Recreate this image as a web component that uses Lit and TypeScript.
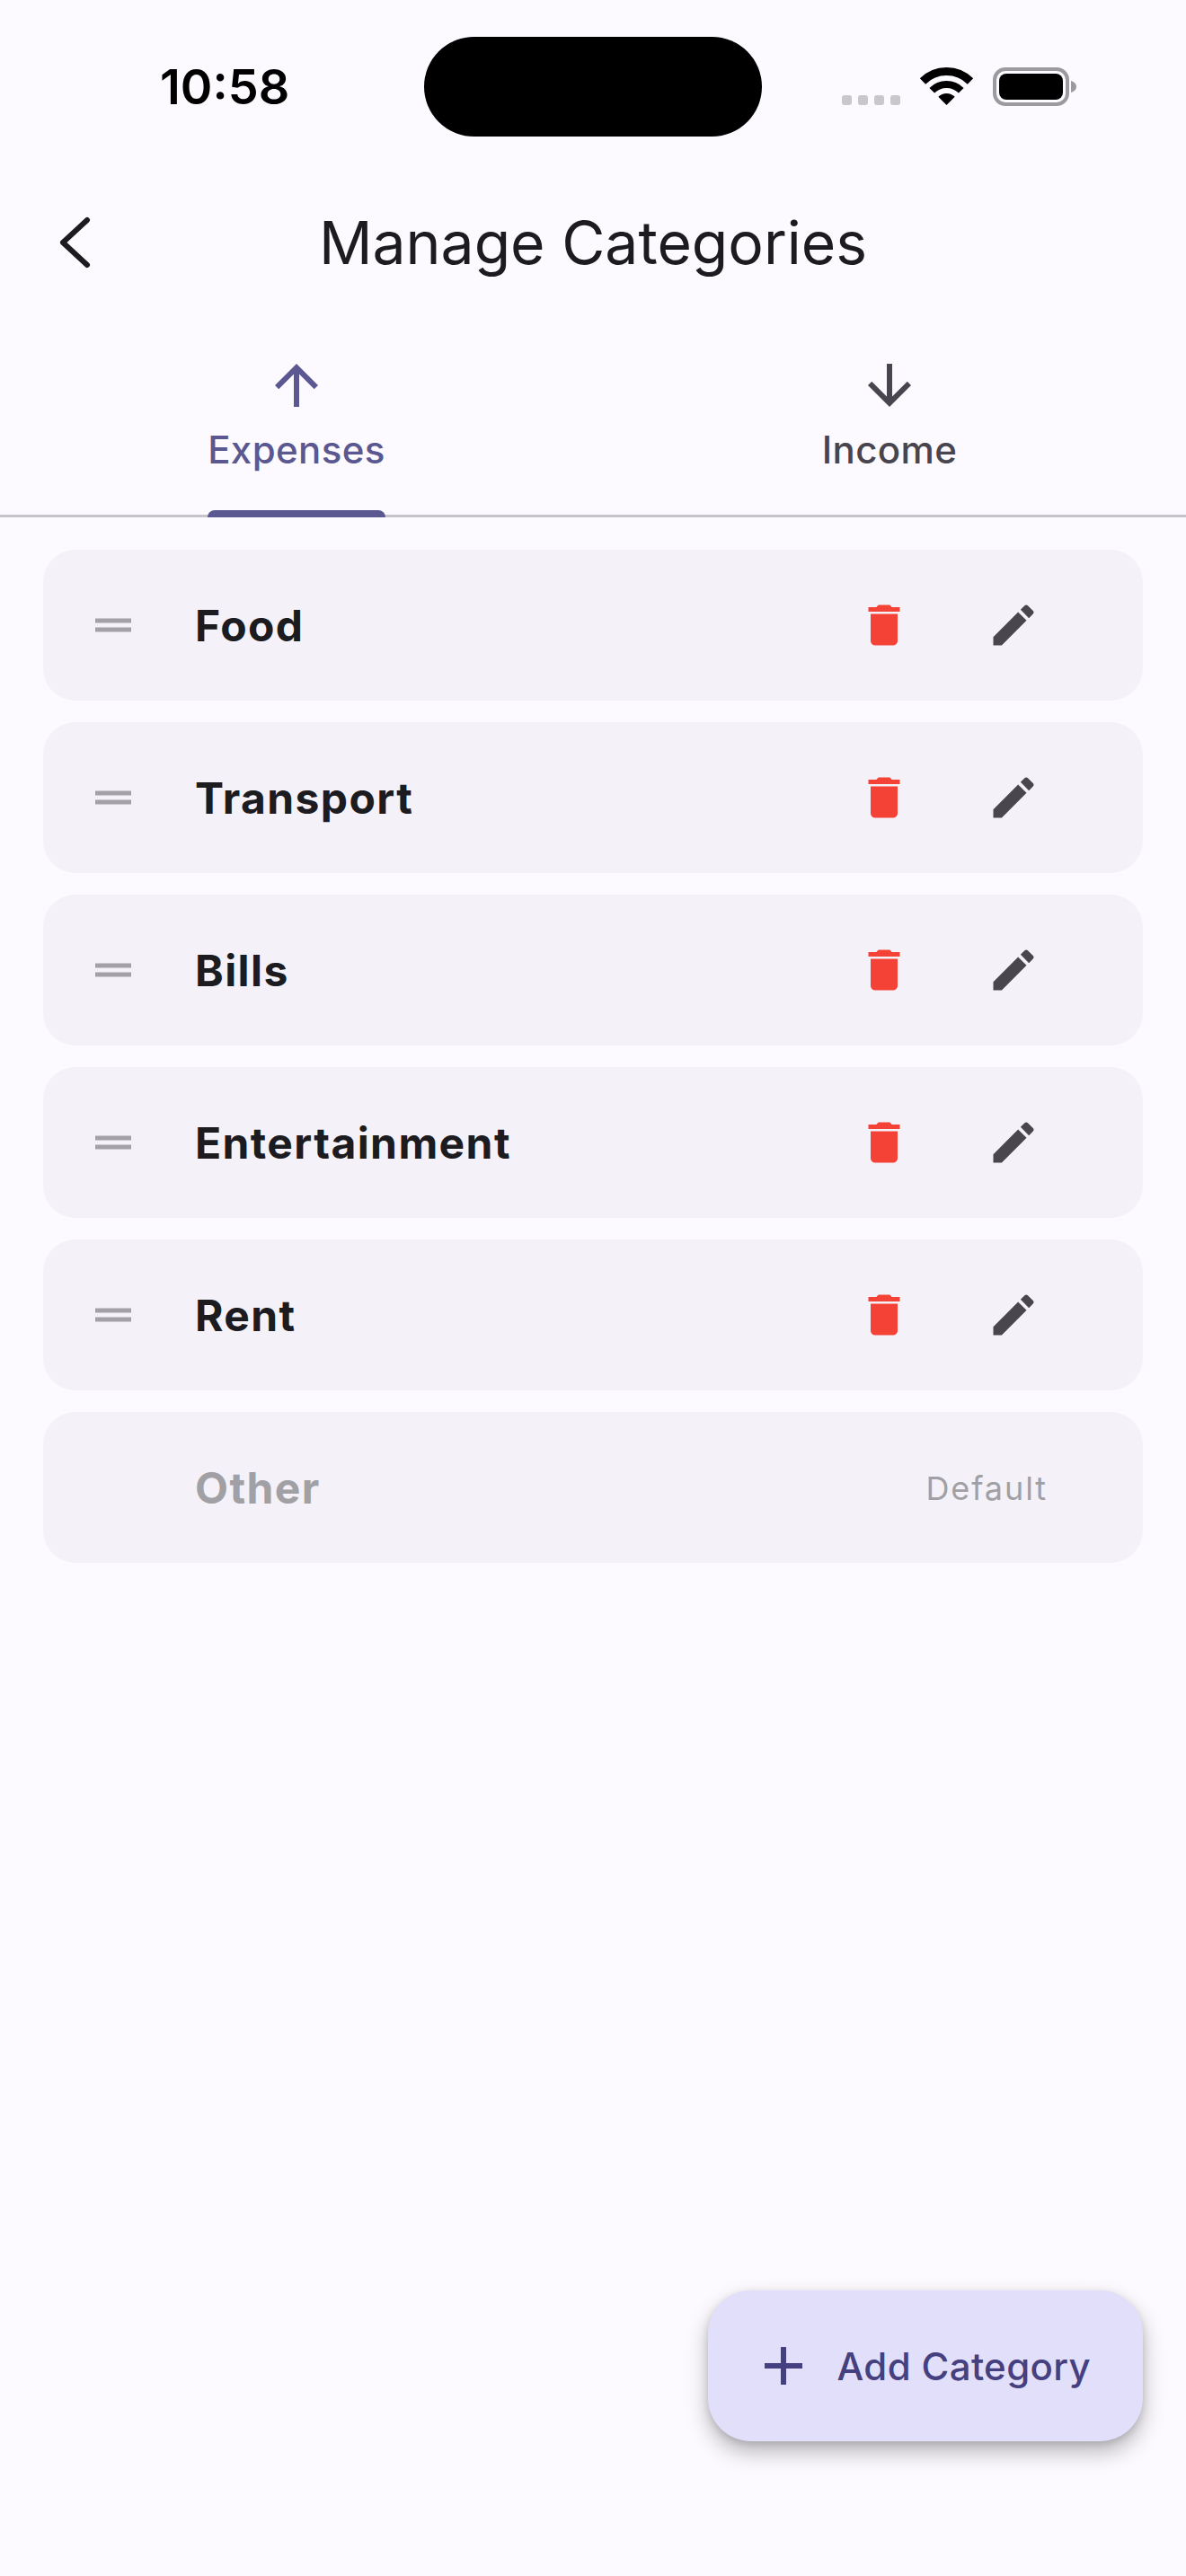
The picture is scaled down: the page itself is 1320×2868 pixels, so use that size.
import { LitElement, html, css, svg } from 'lit';
import { customElement, state } from 'lit/decorators.js';

const icon = (d: string) => html`<svg class="icon" viewBox="0 0 24 24" fill="currentColor">${svg`<path d=${d} />`}</svg>`;

const ARROW_UP = 'M4 12l1.41 1.41L11 7.83V20h2V7.83l5.58 5.59L20 12l-8-8-8 8z';
const ARROW_DOWN = 'M20 12l-1.41-1.41L13 16.17V4h-2v12.17l-5.58-5.59L4 12l8 8 8-8z';
const DRAG = 'M20 9H4v2h16V9zM4 15h16v-2H4v2z';
const TRASH = 'M6 19c0 1.1.9 2 2 2h8c1.1 0 2-.9 2-2V7H6v12zM19 4h-3.5l-1-1h-5l-1 1H5v2h14V4z';
const EDIT = 'M3 17.25V21h3.75L17.81 9.94l-3.75-3.75L3 17.25zM20.71 7.04c.39-.39.39-1.02 0-1.41l-2.34-2.34c-.39-.39-1.02-.39-1.41 0l-1.83 1.83 3.75 3.75 1.83-1.83z';
const PLUS = 'M19 13h-6v6h-2v-6H5v-2h6V5h2v6h6v2z';

@customElement('app-root')
export class AppRoot extends LitElement {
  static styles = css`
    :host {
      display: block;
      position: relative;
      height: 2868px;
      overflow: hidden;
      background: #fcfaff;
      font-family: Inter, 'Liberation Sans', sans-serif;
      color: #1c1b1f;
    }
    .icon {
      display: block;
      width: 60px;
      height: 60px;
    }
    .status {
      display: grid;
      grid-template-columns: 472px 376px 1fr;
      align-items: center;
      height: 192px;
      padding-top: 41px;
      padding-bottom: 40px;
      box-sizing: border-box;
    }
    .time {
      padding-left: 178px;
      font-size: 54px;
      font-weight: 600;
      color: #000;
    }
    .island {
      height: 111px;
      border-radius: 56px;
      background: #000;
    }
    .status-icons {
      display: block;
      margin-left: 89px;
    }
    header {
      display: flex;
      align-items: center;
      justify-content: center;
      position: relative;
      height: 156px;
    }
    header h1 {
      margin: 0;
      font-size: 66px;
      font-weight: 400;
      line-height: 80px;
    }
    .back {
      position: absolute;
      left: 60px;
      top: 44px;
      display: block;
    }
    .tabs {
      display: flex;
      height: 228px;
      box-sizing: border-box;
      border-bottom: 3px solid #c6c3ca;
    }
    .tab {
      flex: 1;
      display: flex;
      justify-content: center;
      color: #49454f;
    }
    .tab.active {
      color: #5b5791;
    }
    .tab-inner {
      position: relative;
      display: flex;
      flex-direction: column;
      align-items: center;
      padding-top: 45px;
    }
    .tab .icon {
      width: 72px;
      height: 72px;
    }
    .tab-label {
      margin-top: 6px;
      font-size: 42px;
      font-weight: 500;
      line-height: 60px;
      letter-spacing: 0.4px;
    }
    .indicator {
      position: absolute;
      left: 0;
      right: 0;
      bottom: -3px;
      height: 8px;
      border-radius: 9px 9px 0 0;
      background: #5b5791;
    }
    .list {
      display: flex;
      flex-direction: column;
      gap: 24px;
      padding: 36px 48px 0;
    }
    .card {
      display: flex;
      align-items: center;
      height: 168px;
      padding: 0 72px 0 48px;
      border-radius: 36px;
      background: #f4f2f8;
    }
    .drag {
      width: 60px;
      height: 60px;
      color: #a3a1a7;
    }
    .name {
      flex: 1;
      margin: 1px 0 0 61px;
      font-size: 48px;
      font-weight: 700;
      line-height: 60px;
      letter-spacing: 1.4px;
    }
    .card.locked .name {
      color: #a1a0a4;
    }
    .default {
      margin: 1px 34px 0 0;
      font-size: 36px;
      font-weight: 400;
      letter-spacing: 1.9px;
      color: #a1a0a4;
    }
    .action {
      display: flex;
      justify-content: center;
      width: 144px;
      color: #49474d;
    }
    .action.danger {
      color: #f44336;
    }
    .fab {
      position: absolute;
      right: 48px;
      bottom: 150px;
      display: flex;
      align-items: center;
      gap: 24px;
      height: 168px;
      padding: 0 58px 0 48px;
      border-radius: 48px;
      background: #e2dffb;
      color: #454080;
      box-shadow: 0 12px 24px rgba(0, 0, 0, 0.27), 0 3px 8px rgba(0, 0, 0, 0.12);
    }
    .fab .icon {
      width: 72px;
      height: 72px;
    }
    .fab span {
      font-size: 42px;
      font-weight: 500;
      letter-spacing: 0.35px;
    }
  `;

  @state() categories = ['Food', 'Transport', 'Bills', 'Entertainment', 'Rent'];

  renderStatusIcons() {
    return html`<svg class="status-icons" width="261" height="43" viewBox="0 0 261 43">
      ${svg`
        <g fill="#c8c7cb">
          <rect x="0" y="31" width="11" height="11" rx="3" />
          <rect x="18" y="31" width="11" height="11" rx="3" />
          <rect x="36" y="31" width="11" height="11" rx="3" />
          <rect x="54" y="31" width="11" height="11" rx="3" />
        </g>
        <path d="M90 15.5A37.5 37.5 0 0 1 143 15.5" fill="none" stroke="#000" stroke-width="9" />
        <path d="M100.24 25.74A23 23 0 0 1 132.76 25.74" fill="none" stroke="#000" stroke-width="8" />
        <path d="M116.5 42L107.3 32.8A13 13 0 0 1 125.7 32.8Z" fill="#000" />
        <rect x="170" y="2" width="81" height="39" rx="12" fill="none" stroke="#9b9a9e" stroke-width="4" />
        <rect x="175" y="7" width="71" height="29" rx="8" fill="#000" />
        <path d="M255 15c3.5 1 6 3.5 6 6.5s-2.5 5.5-6 6.5z" fill="#9b9a9e" />
      `}
    </svg>`;
  }

  render() {
    return html`
      <div class="status">
        <div class="time">10:58</div>
        <div class="island"></div>
        ${this.renderStatusIcons()}
      </div>
      <header>
        <svg class="back" width="48" height="68" viewBox="0 0 48 68" fill="none" stroke="#1c1b1f" stroke-width="6" stroke-linecap="round" stroke-linejoin="round">
          ${svg`<path d="M37 9L10 34L37 59" />`}
        </svg>
        <h1>Manage Categories</h1>
      </header>
      <div class="tabs">
        <div class="tab active">
          <div class="tab-inner">
            ${icon(ARROW_UP)}
            <div class="tab-label">Expenses</div>
            <div class="indicator"></div>
          </div>
        </div>
        <div class="tab">
          <div class="tab-inner">
            ${icon(ARROW_DOWN)}
            <div class="tab-label">Income</div>
          </div>
        </div>
      </div>
      <div class="list">
        ${this.categories.map(
          (name) => html`
            <div class="card">
              <div class="drag">${icon(DRAG)}</div>
              <div class="name">${name}</div>
              <div class="action danger">${icon(TRASH)}</div>
              <div class="action">${icon(EDIT)}</div>
            </div>
          `
        )}
        <div class="card locked">
          <div class="drag"></div>
          <div class="name">Other</div>
          <div class="default">Default</div>
        </div>
      </div>
      <div class="fab">
        ${icon(PLUS)}
        <span>Add Category</span>
      </div>
    `;
  }
}
